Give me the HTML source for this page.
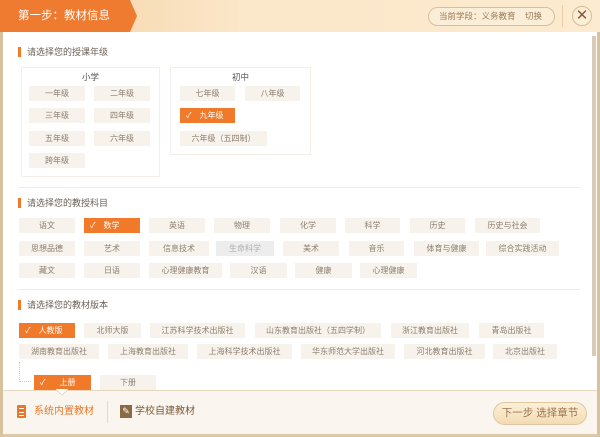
<!DOCTYPE html>
<html><head><meta charset="utf-8"><style>
*{margin:0;padding:0;box-sizing:border-box}
body{width:600px;height:437px;overflow:hidden;background:#fff;font-family:"Liberation Sans","Noto Sans CJK SC",sans-serif;position:relative}
.a{position:absolute}
.hd{left:0;top:0;width:600px;height:32px;background:linear-gradient(90deg,#f3cfa0,#fbe7c9 40%,#fcebd0)}
.frame{left:0;top:32px;width:600px;height:405px;border-left:3px solid #d8c29e;border-right:3px solid #d8c29e;border-bottom:3px solid #dcc8a6}
.b{position:absolute;height:15px;line-height:15px;background:#f7f3ec;color:#8c7d6e;font-size:8px;text-align:center}
.s{background:#f17a2a;color:#fff;text-align:left;padding-left:6px}
.s span{margin-left:8px}
.g{background:#ededed;color:#b0b0b0}
.t{font-size:9px;color:#6c5f55;padding-left:6px;border-left:3px solid #f17a2a;height:10px;line-height:10px}
.box{border:1px solid #f3eee7}
.line{height:1px;background:#f1ece5}
</style></head><body>
<div class="a hd"></div>
<svg class="a" style="left:0;top:0" width="140" height="32"><polygon points="0,0 130,0 137,16 130,32 0,32" fill="#ee7b30"/></svg>
<div class="a" style="left:18px;top:9px;color:#fff;font-size:11.5px;line-height:15px">第一步：教材信息</div>
<div class="a" style="left:428px;top:7px;width:127px;height:19px;border:1px solid #dbbf91;border-radius:10px;background:#fbeed8;font-size:8.5px;line-height:17px;color:#9a7a55;padding-left:10px">当前学段：义务教育&nbsp;&nbsp;&nbsp;&nbsp;切换</div>
<div class="a" style="left:562px;top:5px;width:1px;height:22px;background:#e8cfa8"></div>
<div class="a" style="left:572px;top:6px;width:20px;height:20px;border:1px solid #d9bd90;border-radius:50%;background:#fbeed8;color:#8a5a30;font-size:15px;line-height:17px;text-align:center">✕</div>
<div class="a frame"></div>
<div class="a" style="left:592px;top:36px;width:4px;height:320px;background:#d9cbb5"></div>

<div class="a t" style="left:18px;top:47px">请选择您的授课年级</div>
<div class="a box" style="left:21px;top:67px;width:139px;height:110px"></div>
<div class="a" style="left:21px;top:71px;width:139px;text-align:center;font-size:8.5px;color:#555">小学</div>
<div class="b" style="left:29px;top:86px;width:56px">一年级</div>
<div class="b" style="left:94px;top:86px;width:56px">二年级</div>
<div class="b" style="left:29px;top:108px;width:56px">三年级</div>
<div class="b" style="left:94px;top:108px;width:56px">四年级</div>
<div class="b" style="left:29px;top:131px;width:56px">五年级</div>
<div class="b" style="left:94px;top:131px;width:56px">六年级</div>
<div class="b" style="left:29px;top:153px;width:56px">跨年级</div>
<div class="a box" style="left:170px;top:67px;width:141px;height:88px"></div>
<div class="a" style="left:170px;top:71px;width:141px;text-align:center;font-size:8.5px;color:#555">初中</div>
<div class="b" style="left:180px;top:86px;width:55px">七年级</div>
<div class="b" style="left:245px;top:86px;width:55px">八年级</div>
<div class="b s" style="left:180px;top:108px;width:55px">✓<span>九年级</span></div>
<div class="b" style="left:180px;top:131px;width:87px">六年级（五四制）</div>
<div class="a line" style="left:18px;top:187px;width:562px"></div>

<div class="a t" style="left:18px;top:198px">请选择您的教授科目</div>
<div class="b" style="left:19px;top:218px;width:56px">语文</div>
<div class="b s" style="left:84px;top:218px;width:56px">✓<span>数学</span></div>
<div class="b" style="left:149px;top:218px;width:56px">英语</div>
<div class="b" style="left:214px;top:218px;width:56px">物理</div>
<div class="b" style="left:280px;top:218px;width:56px">化学</div>
<div class="b" style="left:345px;top:218px;width:55px">科学</div>
<div class="b" style="left:410px;top:218px;width:55px">历史</div>
<div class="b" style="left:475px;top:218px;width:65px">历史与社会</div>
<div class="b" style="left:19px;top:241px;width:56px">思想品德</div>
<div class="b" style="left:84px;top:241px;width:56px">艺术</div>
<div class="b" style="left:149px;top:241px;width:60px">信息技术</div>
<div class="b g" style="left:216px;top:241px;width:58px">生命科学</div>
<div class="b" style="left:283px;top:241px;width:56px">美术</div>
<div class="b" style="left:349px;top:241px;width:55px">音乐</div>
<div class="b" style="left:414px;top:241px;width:65px">体育与健康</div>
<div class="b" style="left:486px;top:241px;width:73px">综合实践活动</div>
<div class="b" style="left:19px;top:263px;width:56px">藏文</div>
<div class="b" style="left:84px;top:263px;width:56px">日语</div>
<div class="b" style="left:149px;top:263px;width:73px">心理健康教育</div>
<div class="b" style="left:230px;top:263px;width:57px">汉语</div>
<div class="b" style="left:295px;top:263px;width:57px">健康</div>
<div class="b" style="left:360px;top:263px;width:57px">心理健康</div>
<div class="a line" style="left:18px;top:289px;width:562px"></div>

<div class="a t" style="left:18px;top:300px">请选择您的教材版本</div>
<div class="b s" style="left:19px;top:323px;width:56px">✓<span>人教版</span></div>
<div class="b" style="left:84px;top:323px;width:57px">北师大版</div>
<div class="b" style="left:150px;top:323px;width:95px">江苏科学技术出版社</div>
<div class="b" style="left:255px;top:323px;width:126px">山东教育出版社（五四学制）</div>
<div class="b" style="left:391px;top:323px;width:78px">浙江教育出版社</div>
<div class="b" style="left:479px;top:323px;width:65px">青岛出版社</div>
<div class="b" style="left:19px;top:344px;width:80px">湖南教育出版社</div>
<div class="b" style="left:108px;top:344px;width:80px">上海教育出版社</div>
<div class="b" style="left:197px;top:344px;width:95px">上海科学技术出版社</div>
<div class="b" style="left:301px;top:344px;width:94px">华东师范大学出版社</div>
<div class="b" style="left:404px;top:344px;width:81px">河北教育出版社</div>
<div class="b" style="left:493px;top:344px;width:64px">北京出版社</div>
<div class="a" style="left:19px;top:362px;width:12px;height:20px;border-left:1px dotted #ccc;border-bottom:1px dotted #ccc"></div>
<div class="b s" style="left:34px;top:375px;width:57px">✓<span style="margin-left:14px">上册</span></div>
<div class="b" style="left:100px;top:375px;width:56px">下册</div>

<div class="a" style="left:3px;top:390px;width:594px;height:44px;background:#faf6ef;border-top:1px solid #e6d6bb"></div>
<svg class="a" style="left:56px;top:389px" width="12" height="7"><polygon points="0,0 12,0 6,6" fill="#fff"/><polyline points="0,1 6,6 12,1" fill="none" stroke="#e6d6bb"/></svg>
<div class="a" style="left:17px;top:405px;width:9px;height:13px;background:#e8772a;border-radius:1px"><div style="margin:3px 2px;height:1px;background:#fff"></div><div style="margin:0 2px;height:1px;background:#fff"></div><div style="margin:2px 2px;height:1px;background:#fff"></div></div>
<div class="a" style="left:34px;top:405px;font-size:10px;color:#e8772a;line-height:14px">系统内置教材</div>
<div class="a" style="left:107px;top:401px;width:1px;height:22px;background:#e6d8c2"></div>
<div class="a" style="left:120px;top:405px;width:12px;height:13px;background:#8a6a45;color:#fff;font-size:9px;line-height:13px;text-align:center">✎</div>
<div class="a" style="left:135px;top:405px;font-size:10px;color:#7a5a3a;line-height:14px">学校自建教材</div>
<div class="a" style="left:493px;top:402px;width:94px;height:23px;border:1px solid #e0c79f;border-radius:12px;background:linear-gradient(#fcefd6,#f3dcb3);color:#9a7550;font-size:10.5px;line-height:21px;text-align:center">下一步 选择章节</div>
</body></html>
